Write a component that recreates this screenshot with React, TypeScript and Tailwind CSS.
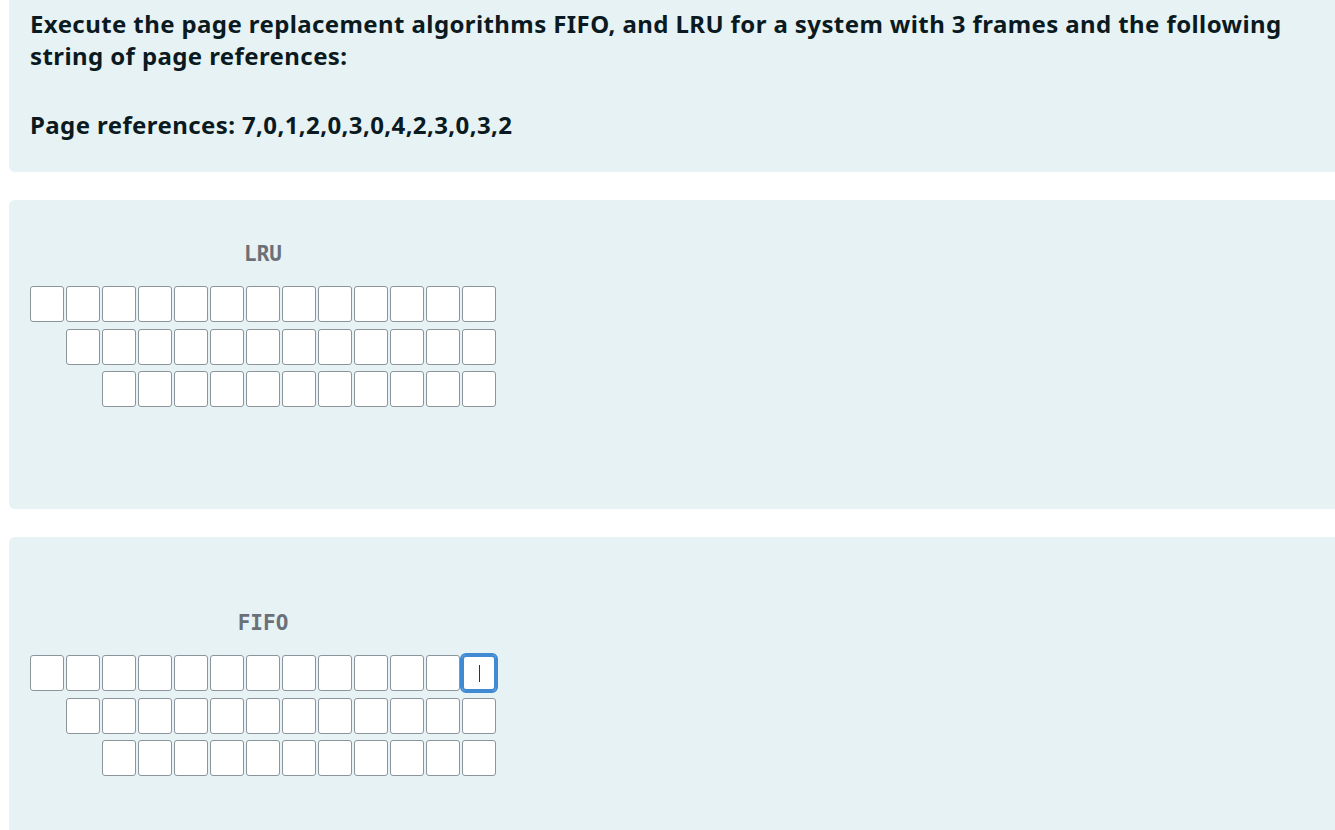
import React from 'react';

const rows = [13, 12, 11];

const Box: React.FC<{ focused?: boolean }> = ({ focused }) =>
    focused ? (
        <div className="relative w-[34px] h-9 shrink-0 rounded-[4px] bg-white border-[2px] border-[#3f8ad2] outline-2 outline-[#3f8ad2] flex items-center justify-center">
            <span className="block w-px h-[17px] bg-[#333]"></span>
        </div>
    ) : (
        <div className="w-[34px] h-9 shrink-0 rounded-[3px] bg-white border border-[#8c949c]"></div>
    );

const FrameGrid: React.FC<{ title: string; focusLast?: boolean }> = ({ title, focusLast }) => (
    <div className="w-[466px]">
        <div className="text-center text-[21px] leading-[24px] font-bold text-[#6b7078]" style={{ fontFamily: '"DejaVu Sans Mono", monospace' }}>
            {title}
        </div>
        <div className="mt-[20px] flex flex-col gap-y-[6.5px]">
            {rows.map((count, r) => (
                <div key={r} className="flex justify-end gap-[2px]">
                    {Array.from({ length: count }).map((_, i) => (
                        <Box key={i} focused={focusLast && r === 0 && i === count - 1} />
                    ))}
                </div>
            ))}
        </div>
    </div>
);

export default function App() {
    return (
        <div className="w-[1335px] h-[830px] overflow-hidden bg-white" style={{ fontFamily: '"Noto Sans", "Open Sans", sans-serif' }}>
            <div className="ml-[9px] w-[1360px]">
                {/* question */}
                <div className="bg-[#e6f2f4] rounded-b-[6px] pl-[21px] pt-[8px] pb-[31px] text-[#0b1a20] font-bold text-[24px] leading-[32px] tracking-[0.4px]">
                    <p>Execute the page replacement algorithms FIFO, and LRU for a system with 3 frames and the following<br />string of page references:</p>
                    <p className="mt-[37px]">Page references: 7,0,1,2,0,3,0,4,2,3,0,3,2</p>
                </div>

                {/* LRU */}
                <div className="mt-[28px] h-[309px] bg-[#e6f2f4] rounded-[6px] pl-[21px] pt-[42px]">
                    <FrameGrid title="LRU" />
                </div>

                {/* FIFO */}
                <div className="mt-[28px] h-[320px] bg-[#e6f2f4] rounded-[6px] pl-[21px] pt-[74px]">
                    <FrameGrid title="FIFO" focusLast />
                </div>
            </div>
        </div>
    );
}
